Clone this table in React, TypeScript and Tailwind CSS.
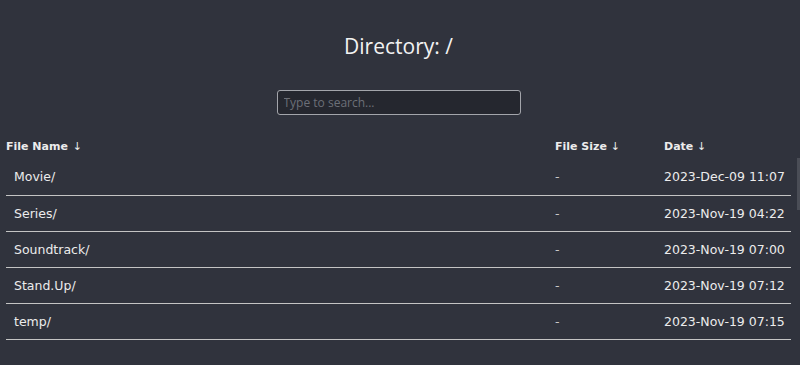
import React from "react";

type Entry = { name: string; size: string; date: string };

const entries: Entry[] = [
  { name: "Movie/", size: "-", date: "2023-Dec-09 11:07" },
  { name: "Series/", size: "-", date: "2023-Nov-19 04:22" },
  { name: "Soundtrack/", size: "-", date: "2023-Nov-19 07:00" },
  { name: "Stand.Up/", size: "-", date: "2023-Nov-19 07:12" },
  { name: "temp/", size: "-", date: "2023-Nov-19 07:15" },
];

export default function App() {
  return (
    <div className="min-h-[365px] w-full bg-[#30333d] flex">
      <div className="flex-1 flex flex-col text-[#ececec] font-['DejaVu_Sans',Verdana,sans-serif]">
        <h1 className="mt-[33px] text-center text-[21px] leading-[26px] font-['Open_Sans',sans-serif] text-[#f2f2f2]">
          Directory: /
        </h1>
        <div className="mt-[31px] flex justify-center">
          <input
            type="text"
            placeholder="Type to search..."
            className="w-[244px] h-[25px] rounded-[3px] border border-[#a3a5ab] bg-[#25272f] px-[6px] text-[12px] font-['Open_Sans',sans-serif] text-[#ddd] placeholder:text-[#6c6f78] outline-none"
          />
        </div>
        <table className="mt-[20px] ml-[6px] w-[785px] border-collapse text-[12.5px]">
          <thead>
            <tr className="h-[24px]">
              <th className="text-left font-bold text-[11px] pl-0 w-[549px]">
                File Name <span className="font-normal ml-[1px]">↓</span>
              </th>
              <th className="text-left font-bold text-[11px] w-[109px]">
                File Size <span className="font-normal">↓</span>
              </th>
              <th className="text-left font-bold text-[11px]">
                Date <span className="font-normal">↓</span>
              </th>
            </tr>
          </thead>
          <tbody>
            {entries.map((e) => (
              <tr key={e.name} className="h-[36px] border-b border-[#c4c4c4]">
                <td className="pl-[8px] pt-[2px]">{e.name}</td>
                <td className="pt-[2px] text-[#c8c8c8]">{e.size}</td>
                <td className="pt-[2px]">{e.date}</td>
              </tr>
            ))}
          </tbody>
        </table>
      </div>
      {/* slim scrollbar track */}
      <div className="w-[3px] flex flex-col">
        <div className="mt-[158px] h-[52px] bg-[#4a4d56]" />
      </div>
    </div>
  );
}
